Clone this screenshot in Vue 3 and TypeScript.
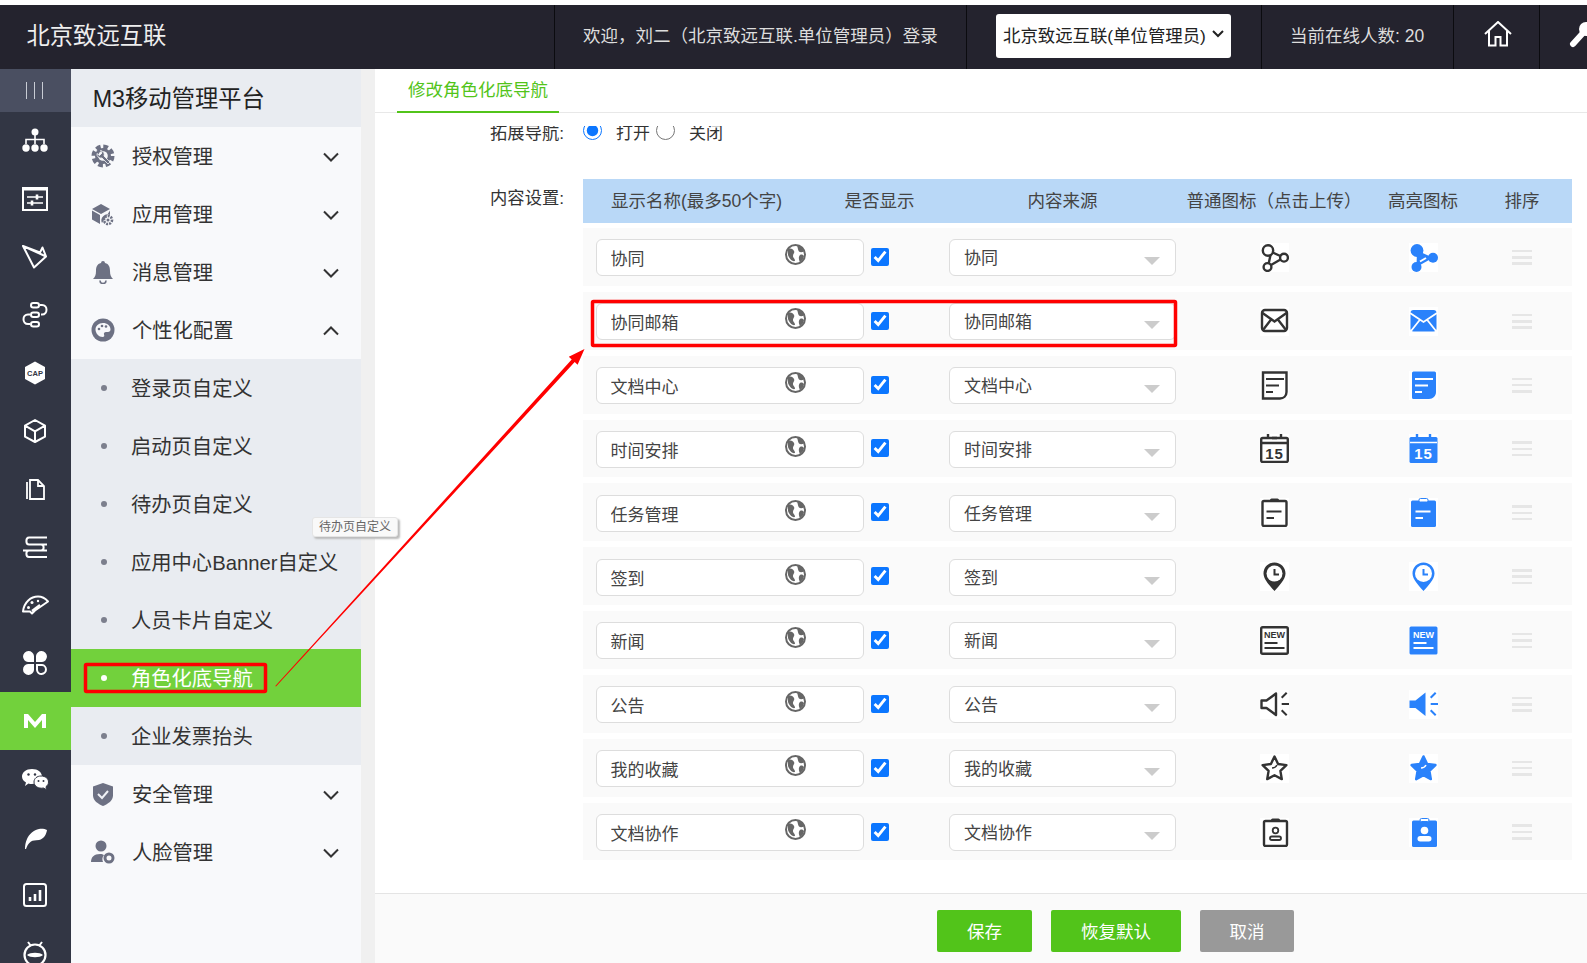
<script setup lang="ts">
const railIcons: string[] = [
  // org
  '<g fill="#fff"><circle cx="15" cy="6" r="3.5"/><circle cx="6" cy="22" r="3.7"/><circle cx="15" cy="22" r="3.7"/><circle cx="24" cy="22" r="3.7"/></g><path d="M15 6v12M6 18v-4.500h18V18" fill="none" stroke="#fff" stroke-width="1.600"/>',
  // sliders panel
  '<rect x="3" y="4" width="24" height="22" fill="none" stroke="#fff" stroke-width="2"/><rect x="3" y="4" width="24" height="2.500" fill="#fff"/><path d="M7 13h16M7 19h16" stroke="#fff" stroke-width="1.600"/><path d="M17 10.500v5M12 16.500v5" stroke="#fff" stroke-width="2.600"/>',
  // send
  '<path d="M3 4l23 10.500-12 11zM3 4l17 6.500 2.500-5 3.500 9" fill="none" stroke="#fff" stroke-width="2" stroke-linejoin="round"/>',
  // flow
  '<g fill="none" stroke="#fff" stroke-width="2"><rect x="11" y="3" width="8" height="4.500" rx="2.200"/><rect x="11" y="12.500" width="8" height="4.500" rx="2.200"/><rect x="11" y="22" width="8" height="4.500" rx="2.200"/><path d="M20 5h2c6 0 6 9.500 0 9.500h-1M10 14.500H8c-6 0-6 9.500 0 9.500h2"/></g>',
  // cap
  '<path d="M15 3.500l10 5.500v12l-10 5.500-10-5.500V9z" fill="#fff"/><text x="15" y="17.800" text-anchor="middle" font-size="7.500" font-weight="700" fill="#323644" font-family="Liberation Sans">CAP</text>',
  // cube
  '<path d="M15 4l10 5.700v11L15 26 5 20.700v-11zM5 9.700l10 5.700 10-5.700M15 15.400V26" fill="none" stroke="#fff" stroke-width="2" stroke-linejoin="round"/>',
  // file
  '<path d="M10 6h8l6 6v13H10zM18 6v6h6M7 8v17" fill="none" stroke="#fff" stroke-width="1.800"/>',
  // stack
  '<g fill="none" stroke="#fff" stroke-width="2"><path d="M27 5.500H9C5.500 5.500 5.500 12.500 9 12.500h18M3 18.500h18c3.500 0 3.500-6 0-6M3 18.500h24M9 18.500c-3.500 0-3.500 6.500 0 6.500h18"/></g>',
  // gauge
  '<path d="M3 21.500C4 12 11 6.500 18 6.500c4 0 7 1.500 10 5l-13 9-3 3-2-2z" fill="none" stroke="#fff" stroke-width="2" stroke-linejoin="round"/><g fill="#fff"><circle cx="8.500" cy="17.500" r="1.500"/><circle cx="12" cy="12.500" r="1.500"/><circle cx="18" cy="11" r="1.200"/></g><path d="M12 21l8-6" stroke="#fff" stroke-width="2.200"/>',
  // clover
  '<g fill="#fff"><path d="M14 14H8a5.500 5.500 0 1 1 6-6zM16 14h6a5.500 5.500 0 1 0-6-6zM14 16H8a5.500 5.500 0 1 0 6 6z"/></g><path d="M17 17h5a4.500 4.500 0 1 1-5 5z" fill="none" stroke="#fff" stroke-width="2"/>',
  // m
  '<path d="M4 22V8h4l7 8 7-8h4v14h-4V14l-7 8-7-8v8z" fill="#fff"/>',
  // wechat
  '<path d="M12 5c6 0 10 3.500 10 7.500 0 4.500-5 7.500-10 7.500-1.500 0-2.500 0-3.500-.5L5 22l1-3.500C3.500 17 2 15 2 12.500 2 8.500 6 5 12 5z" fill="#fff"/><path d="M21 12c4.500 0 7.500 2.700 7.500 6 0 2-1 3.500-2.500 4.700l.5 3-3-1.700c-5 1-9.500-1.700-9.500-6 0-3.500 3-6 7-6z" fill="#fff" stroke="#323644"/><g fill="#323644"><circle cx="8.500" cy="10.500" r="1.200"/><circle cx="15" cy="10.500" r="1.200"/><circle cx="18.500" cy="17" r="1"/><circle cx="23.500" cy="17" r="1"/></g>',
  // feather
  '<path d="M5 27c0-3 .5-7 2-10 2-5 7-9 12-10 3-.5 6 0 8 1-.5 4-3 9-8 10-4 .8-6 0-8 1.500-3 2-4 5-5 7.500z" fill="#fff"/>',
  // chart
  '<rect x="4" y="4" width="22" height="22" rx="2.500" fill="none" stroke="#fff" stroke-width="2"/><path d="M10 21v-4M15 21v-7M20 21V10" stroke="#fff" stroke-width="2.600"/>',
  // robot
  '<circle cx="15" cy="17" r="10.500" fill="none" stroke="#fff" stroke-width="2.200"/><path d="M8 4l3 4M22 4l-3 4" stroke="#fff" stroke-width="2"/><path d="M7 17c3-3 13-3 16 0-3 3-13 3-16 0z" fill="#fff"/>',
]

const sideIcons: Record<string, string> = {
  gear: '<circle cx="12" cy="12" r="9" fill="none" stroke="#6d7183" stroke-width="5" stroke-dasharray="4.500 2.570"/><circle cx="12" cy="12" r="8" fill="#6d7183"/><circle cx="12" cy="12" r="4.800" fill="#f8f9fb"/><path d="M9.500 6.500a4 4 0 0 1 3.500 5.500l6 6-2 2-6-6a4 4 0 0 1-5-4.500l2.500 2 2.500-2.500z" fill="#6d7183" stroke="#f8f9fb" stroke-width=".8"/>',
  box: '<path d="M10 2l9 5-9 5-9-5zM1 8.500l8 4.500v9L1 17.500zM19 8.500V13a6 6 0 0 0-8 8z" fill="#6d7183"/><circle cx="17" cy="18" r="4" fill="none" stroke="#6d7183" stroke-width="2.600" stroke-dasharray="2 1"/><circle cx="17" cy="18" r="1.500" fill="#6d7183"/>',
  bell: '<path d="M12 1a2 2 0 0 1 2 2c4 1 5 4 5 8 0 4 1 6 3 8H2c2-2 3-4 3-8 0-4 1-7 5-8a2 2 0 0 1 2-2z" fill="#6d7183"/><path d="M9 20.500a3 3 0 0 0 6 0" fill="none" stroke="#6d7183" stroke-width="1.600"/>',
  palette: '<circle cx="12" cy="12" r="11.500" fill="#6d7183"/><path d="M12 5c-4.500 0-7.500 3-7.500 6.500 0 4 3.500 7.500 7 7.500 2 0 2-1.500 1.500-2.500-.5-1.500.5-2.500 2-2.500h2c1.500 0 2.500-1 2.500-2.500C19.500 7.500 16 5 12 5z" fill="#f8f9fb"/><g fill="#6d7183"><circle cx="8" cy="11" r="1.300"/><circle cx="11" cy="8" r="1.300"/><circle cx="15" cy="8.500" r="1.300"/></g>',
  shield: '<path d="M12 1l10 3.500v9c0 5-5 8.500-10 10.500C7 22 2 18.500 2 13.500v-9z" fill="#6d7183"/><path d="M7 12l4 4 6-7" fill="none" stroke="#f0f2f6" stroke-width="2"/>',
  person: '<circle cx="10" cy="6" r="5.500" fill="#6d7183"/><path d="M0 22c0-5 3-8 9-8 2 0 3 .5 4 1-2 2-2 5-1 7z" fill="#6d7183"/><circle cx="18" cy="18" r="4" fill="none" stroke="#6d7183" stroke-width="3"/>',
}

type TableIcon = [string, string]
const D = '#333'
const B = '#2a82fb'
const tableIcons: Record<string, TableIcon> = {
  share: [
    `<g fill="none" stroke="${D}" stroke-width="2.400"><circle cx="8" cy="7.500" r="5.200"/><circle cx="24" cy="14.700" r="3.900"/><circle cx="7.500" cy="24" r="3.900"/><path d="M12.700 9.500l7.700 3.500M20.500 16.500l-9.500 5.500M10.500 12l-1.700 8"/></g>`,
    `<g fill="${B}"><circle cx="8" cy="7.500" r="6.400"/><circle cx="24" cy="14.700" r="5"/><circle cx="7.500" cy="24" r="5"/><path d="M8 7.500l16 7.200-16.500 9.300z"/></g><path d="M11 18.500l6-3.500" stroke="#fff" stroke-width="2"/>`,
  ],
  mail: [
    `<g fill="none" stroke="${D}" stroke-width="2.400"><rect x="2" y="3" width="25" height="21" rx="3"/><path d="M2.500 6l12 8.500L26.500 6M3 23l8.500-11M26 23l-8.500-11"/></g>`,
    `<rect x="1.500" y="3" width="26" height="21.500" rx="3" fill="${B}"/><path d="M1 6l13.500 9L28 6M2 24l9.500-12M27 24l-9.500-12" fill="none" stroke="#fff" stroke-width="1.800"/>`,
  ],
  doc: [
    `<path d="M3 1.500h23.500V21c0 4-3 6.500-6.500 6.500H3z" fill="none" stroke="${D}" stroke-width="2.400"/><path d="M6 8h18M6 14.500h13M6 21h7" stroke="${D}" stroke-width="2"/>`,
    `<path d="M3 2a1.500 1.500 0 0 1 1.500-1.500H25.500A1.500 1.500 0 0 1 27 2v19c0 4-3 7-7 7H4.500A1.500 1.500 0 0 1 3 26.500z" fill="${B}"/><path d="M6 8h18M6 14.500h13M6 21h7" stroke="#fff" stroke-width="2"/>`,
  ],
  cal: [
    `<rect x="1.200" y="4" width="26.600" height="24" rx="1.500" fill="none" stroke="${D}" stroke-width="2.400"/><path d="M8 0v5M21 0v5M1 9h27M12 4h5" stroke="${D}" stroke-width="2.400"/><text x="14.500" y="24.500" text-anchor="middle" font-size="15" font-weight="700" letter-spacing="1" fill="${D}" font-family="Liberation Sans">15</text>`,
    `<rect x=".5" y="3" width="28" height="26" rx="1.500" fill="${B}"/><path d="M8 0v4M21 0v4" stroke="${B}" stroke-width="2.400"/><path d="M1 8.500h27" stroke="#fff" stroke-width="1.500"/><text x="14.500" y="24.500" text-anchor="middle" font-size="15" font-weight="700" letter-spacing="1" fill="#fff" font-family="Liberation Sans">15</text>`,
  ],
  clip: [
    `<rect x="2.500" y="3" width="24" height="25" rx="1.500" fill="none" stroke="${D}" stroke-width="2.400"/><rect x="10" y=".5" width="9" height="3.500" rx="1.500" fill="${D}"/><path d="M6.500 13.500h15M6.500 20h7.500" stroke="${D}" stroke-width="2"/>`,
    `<rect x="2" y="2.500" width="25" height="26.500" rx="1.500" fill="${B}"/><rect x="10" y=".5" width="9" height="3.500" rx="1.500" fill="#fff" stroke="${B}"/><path d="M6.500 13.500h15M6.500 20h7.500" stroke="#fff" stroke-width="2"/>`,
  ],
  pin: [
    `<path d="M14.500.5C8 .5 3.500 5.500 3.500 11.500c0 6 7 13 11 17.500 4-4.500 11-11.500 11-17.500C25.500 5.500 21 .5 14.500.5z" fill="${D}"/><circle cx="14.500" cy="11.500" r="8" fill="#fff"/><path d="M14.500 7v5.500h4.500" fill="none" stroke="${D}" stroke-width="2"/>`,
    `<path d="M14.500.5C8 .5 3.500 5.500 3.500 11.500c0 6 7 13 11 17.500 4-4.500 11-11.500 11-17.500C25.500 5.500 21 .5 14.500.5z" fill="${B}"/><circle cx="14.500" cy="11.500" r="8.500" fill="#fff"/><path d="M14.500 7v5.500h4.500" fill="none" stroke="${B}" stroke-width="2"/>`,
  ],
  news: [
    `<rect x="1.200" y="1.200" width="26.600" height="26.600" rx="1.500" fill="none" stroke="${D}" stroke-width="2.400"/><text x="14.500" y="11.800" text-anchor="middle" font-size="9" font-weight="700" fill="${D}" font-family="Liberation Sans">NEW</text><path d="M4.500 17h13M4.500 22h20" stroke="${D}" stroke-width="2"/>`,
    `<rect x=".5" y=".5" width="28" height="28" rx="1.500" fill="${B}"/><text x="14.500" y="11.800" text-anchor="middle" font-size="9" font-weight="700" fill="#fff" font-family="Liberation Sans">NEW</text><path d="M4.500 17h13M4.500 22h20" stroke="#fff" stroke-width="2"/>`,
  ],
  horn: [
    `<path d="M1.500 10.500v7.500h5l9.500 7V3.500l-9.500 7z" fill="none" stroke="${D}" stroke-width="2.400" stroke-linejoin="round"/><path d="M21.700 7.700l5-5M21.700 14H29M21.700 20.300l5 5" stroke="${D}" stroke-width="2"/>`,
    `<path d="M.5 10.500v7.500h6l10 8V2.500l-10 8z" fill="${B}"/><path d="M21.700 7.700l5-5M21.700 14H29M21.700 20.300l5 5" stroke="${B}" stroke-width="2"/>`,
  ],
  star: [
    `<path d="M14.500 2.500L18.100 10L26.400 11.100L20.400 16.900L21.800 25.100L14.500 21.200L7.200 25.100L8.600 16.900L2.600 11.100L10.900 10Z" fill="none" stroke="${D}" stroke-width="2.400" stroke-linejoin="round"/><path d="M12 14c2 0 4-1 5-3" fill="none" stroke="${D}" stroke-width="1.500"/>`,
    `<path d="M14.500 2.500L18.100 10L26.400 11.100L20.400 16.900L21.800 25.100L14.500 21.200L7.200 25.100L8.600 16.900L2.600 11.100L10.900 10Z" fill="${B}" stroke="${B}" stroke-width="2.500" stroke-linejoin="round"/><path d="M12 14c2 0 4-1 5-3" fill="none" stroke="#fff" stroke-width="1.500"/>`,
  ],
  badge: [
    `<rect x="4" y="3" width="23" height="25" rx="1.500" fill="none" stroke="${D}" stroke-width="2.400"/><rect x="11" y=".5" width="9" height="3.500" rx="1.500" fill="${D}"/><circle cx="15.500" cy="12.500" r="2.800" fill="none" stroke="${D}" stroke-width="1.800"/><rect x="10" y="18.500" width="11" height="3.500" rx="1.700" fill="none" stroke="${D}" stroke-width="1.800"/>`,
    `<rect x="3" y="2.500" width="25" height="26.500" rx="1.500" fill="${B}"/><rect x="11" y=".5" width="9" height="3" rx="1.500" fill="#fff" stroke="${B}"/><circle cx="15.500" cy="12.500" r="3.800" fill="#fff"/><rect x="8.500" y="18" width="14" height="5.500" rx="2.700" fill="#fff"/>`,
  ],
}

interface NavRow {
  name: string
  icon: string
}

const rows: NavRow[] = [
  { name: '协同', icon: 'share' },
  { name: '协同邮箱', icon: 'mail' },
  { name: '文档中心', icon: 'doc' },
  { name: '时间安排', icon: 'cal' },
  { name: '任务管理', icon: 'clip' },
  { name: '签到', icon: 'pin' },
  { name: '新闻', icon: 'news' },
  { name: '公告', icon: 'horn' },
  { name: '我的收藏', icon: 'star' },
  { name: '文档协作', icon: 'badge' },
]

const topMenus = [
  { label: '授权管理', icon: 'gear' },
  { label: '应用管理', icon: 'box' },
  { label: '消息管理', icon: 'bell' },
]
const subMenus = ['登录页自定义', '启动页自定义', '待办页自定义', '应用中心Banner自定义', '人员卡片自定义', '角色化底导航', '企业发票抬头']
const bottomMenus = [
  { label: '安全管理', icon: 'shield' },
  { label: '人脸管理', icon: 'person' },
]
</script>

<template>
  <div class="page">
    <header class="topbar">
      <div class="brand">北京致远互联</div>
      <div class="cell welcome">欢迎，刘二（北京致远互联.单位管理员）登录</div>
      <div class="cell unit">
        <div class="unit-select">
          <span>北京致远互联(单位管理员)</span>
          <svg width="14" height="10" viewBox="0 0 14 10"><path d="M2 2l5 5 5-5" fill="none" stroke="#222" stroke-width="2" /></svg>
        </div>
      </div>
      <div class="cell online">当前在线人数: 20</div>
      <div class="cell home">
        <svg width="28" height="26" viewBox="0 0 28 26"><path d="M1 13L14 1l13 12M5 10v14.500h6.500V16h5v8.500H23V10" fill="none" stroke="#fff" stroke-width="2" /></svg>
      </div>
      <div class="cell tool">
        <svg width="30" height="30" viewBox="0 0 30 30"><path d="M6 25L16 14" stroke="#fff" stroke-width="6" stroke-linecap="round" /><circle cx="19" cy="10" r="7" fill="#fff" /><path d="M21 7l7-4v6z" fill="#24232e" /></svg>
      </div>
    </header>

    <div class="body">
      <nav class="rail">
        <div class="rail-item rail-toggle"><i></i><i></i><i></i></div>
        <div v-for="(ic, i) in railIcons" :key="i" class="rail-item" :class="{ on: i === 10 }">
          <svg width="30" height="30" viewBox="0 0 30 30" v-html="ic"></svg>
        </div>
      </nav>

      <aside class="side">
        <div class="side-title">M3移动管理平台</div>
        <div v-for="m in topMenus" :key="m.label" class="menu">
          <svg class="menu-icon" width="24" height="24" viewBox="0 0 24 24" v-html="sideIcons[m.icon]"></svg>
          <span>{{ m.label }}</span>
          <svg class="chev" width="18" height="10" viewBox="0 0 18 10"><path d="M2 1.500l7 7 7-7" fill="none" stroke="#333" stroke-width="2" /></svg>
        </div>
        <div class="menu">
          <svg class="menu-icon" width="24" height="24" viewBox="0 0 24 24" v-html="sideIcons.palette"></svg>
          <span>个性化配置</span>
          <svg class="chev" width="18" height="10" viewBox="0 0 18 10"><path d="M2 8.500l7-7 7 7" fill="none" stroke="#333" stroke-width="2" /></svg>
        </div>
        <div v-for="s in subMenus" :key="s" class="sub" :class="{ active: s === '角色化底导航' }">
          <i class="dot"></i><span>{{ s }}</span>
        </div>
        <div v-for="m in bottomMenus" :key="m.label" class="menu">
          <svg class="menu-icon" width="24" height="24" viewBox="0 0 24 24" v-html="sideIcons[m.icon]"></svg>
          <span>{{ m.label }}</span>
          <svg class="chev" width="18" height="10" viewBox="0 0 18 10"><path d="M2 1.500l7 7 7-7" fill="none" stroke="#333" stroke-width="2" /></svg>
        </div>
      </aside>

      <div class="gutter"></div>

      <main class="main">
        <div class="tabs"><div class="tab">修改角色化底导航</div></div>
        <div class="scroll">
          <div class="form-row radio-row">
            <label class="form-label">拓展导航:</label>
            <input class="radio" type="radio" name="ext" checked />
            <span class="radio-text">打开</span>
            <input class="radio radio-off" type="radio" name="ext" />
            <span class="radio-text">关闭</span>
          </div>

          <div class="form-row content-row">
            <label class="form-label content-label">内容设置:</label>
            <div class="table">
              <div class="grid head">
                <div class="h-name">显示名称(最多50个字)</div>
                <div class="c">是否显示</div>
                <div class="h-src">内容来源</div>
                <div class="c h-up">普通图标（点击上传）</div>
                <div class="c">高亮图标</div>
                <div class="c">排序</div>
              </div>
              <div v-for="r in rows" :key="r.name" class="grid row">
                <div class="field">
                  <input class="name-input" :value="r.name" readonly />
                  <svg class="globe" width="21" height="21" viewBox="0 0 21 21">
                    <circle cx="10.500" cy="10.500" r="9.500" fill="#fff" stroke="#666" stroke-width="2" />
                    <path d="M3 5c3-1 5 0 6 2s-1 3-1 5 2 2 2 5c-3 1-6-3-7-6zM12 1.500c3 0 6 3 7 6-2 1-4 1-5 0s-1-3-2-6zM15 11c2-1 3 0 4 1-.5 3-2 5-4 6-1-2-2-5 0-7z" fill="#666" />
                  </svg>
                </div>
                <div class="c"><input class="check" type="checkbox" checked /></div>
                <div class="source">
                  <span>{{ r.name }}</span>
                  <i class="tri"></i>
                </div>
                <div class="c"><svg class="tbl-icon" width="29" height="29" viewBox="0 0 29 29" v-html="tableIcons[r.icon][0]"></svg></div>
                <div class="c"><svg class="tbl-icon" width="29" height="29" viewBox="0 0 29 29" v-html="tableIcons[r.icon][1]"></svg></div>
                <div class="c"><div class="drag"><i></i><i></i><i></i></div></div>
              </div>
            </div>
          </div>
        </div>
        <footer class="footer">
          <button class="btn">保存</button>
          <button class="btn wide">恢复默认</button>
          <button class="btn gray">取消</button>
        </footer>
      </main>
    </div>

    <!-- 标注层：红框和箭头 -->
    <svg class="marks" width="1587" height="963" viewBox="0 0 1587 963">
      <rect x="85.500" y="664.500" width="180" height="27" rx="1" fill="none" stroke="#f00" stroke-width="3.500" />
      <rect x="592.500" y="301.500" width="583" height="44" rx="1" fill="none" stroke="#f00" stroke-width="3.500" />
      <polygon points="276,686.500 574.700,362.100 577.600,364.800 584.500,349 568.800,356.800 571.700,359.500 275.300,686" fill="#f00" />
    </svg>
    <div class="tip">待办页自定义</div>
  </div>
</template>

<style>
html, body { margin: 0; background: #fff; overflow: hidden; }
</style>

<style scoped>
.page {
  position: relative;
  width: 1587px;
  height: 963px;
  padding-top: 5px;
  box-sizing: border-box;
  overflow: hidden;
  display: flex;
  flex-direction: column;
  font-family: "Liberation Sans", "Noto Sans CJK SC", sans-serif;
  font-size: 17.500px;
  color: #333;
}

.topbar {
  height: 64px;
  flex: none;
  display: flex;
  background: #24232e;
  color: #ddd;
}
.brand {
  width: 554px;
  flex: none;
  box-sizing: border-box;
  padding-left: 26.500px;
  line-height: 62px;
  font-size: 23.300px;
  color: #eee;
}
.cell {
  border-left: 1px solid #0b0b0f;
  box-sizing: border-box;
  flex: none;
  display: flex;
  align-items: center;
  padding-bottom: 6px;
}
.welcome { width: 412px; padding-left: 28px; }
.unit { width: 295px; padding-left: 29px; padding-bottom: 2px; }
.unit-select {
  width: 235px;
  height: 44px;
  box-sizing: border-box;
  padding-left: 7px;
  padding-bottom: 4px;
  background: #fff;
  border-radius: 3px;
  color: #222;
  font-size: 17.400px;
  display: flex;
  align-items: center;
  gap: 5px;
}
.online { width: 192px; padding-left: 28px; }
.home { width: 86px; padding-left: 30px; }
.tool { width: 48px; padding-left: 27px; overflow: hidden; }
.tool svg { flex: none; }

.body {
  flex: 1;
  display: flex;
  min-height: 0;
}
.rail {
  width: 71px;
  flex: none;
  background: #323644;
  overflow: hidden;
}
.rail-item {
  height: 58px;
  box-sizing: border-box;
  padding-right: 2px;
  display: flex;
  align-items: center;
  justify-content: center;
}
.rail-item.on { background: #72d13c; }
.rail-toggle {
  height: 43px;
  gap: 6.500px;
  background: #4a4f61;
}
.rail-toggle i {
  width: 1.500px;
  height: 17px;
  background: #c8ccd4;
}

.side {
  width: 290px;
  flex: none;
  background: #f8f9fb;
}
.side-title {
  height: 58px;
  line-height: 60px;
  padding-left: 21.700px;
  font-size: 23.300px;
  color: #222;
  background: #e9ecf1;
}
.menu {
  height: 58px;
  display: flex;
  align-items: center;
  padding: 0 21px 0 20px;
  font-size: 20.300px;
}
.menu span { margin-top: -2px; margin-left: -1px; }
.menu-icon { flex: none; margin-right: 18px; }
.chev { margin-left: auto; margin-top: 2px; }
.sub {
  height: 58px;
  display: flex;
  align-items: center;
  padding-left: 30px;
  font-size: 20.300px;
  background: #e9ecf1;
}
.sub span { margin-top: -2px; margin-left: -1px; }
.dot {
  width: 6px;
  height: 6px;
  border-radius: 50%;
  margin-right: 25px;
  background: #7c7f8d;
}
.sub.active { background: #72d13c; color: #fff; }
.sub.active .dot { background: #fff; }

.gutter { width: 14px; flex: none; background: #f0f0f0; }

.main {
  flex: 1;
  min-width: 0;
  display: flex;
  flex-direction: column;
}
.tabs {
  height: 44px;
  flex: none;
  box-sizing: border-box;
  padding-left: 22px;
  border-bottom: 1px solid #e8e8e8;
}
.tab {
  width: 162px;
  height: 44px;
  box-sizing: border-box;
  padding-left: 11px;
  line-height: 43px;
  color: #52c41a;
  border-bottom: 2px solid #52c41a;
}
.scroll {
  flex: 1;
  min-height: 0;
  margin-top: 13px;
  overflow: hidden;
}
.form-row { display: flex; }
.form-label {
  width: 208px;
  flex: none;
  box-sizing: border-box;
  padding-right: 19px;
  text-align: right;
  font-size: 17.300px;
}
.radio-row {
  height: 30px;
  margin-top: -9px;
  align-items: center;
}
.radio-row .form-label { margin-bottom: 1px; }
.radio {
  width: 19px;
  height: 19px;
  margin: -3px 14px 0 0;
  flex: none;
  accent-color: #0b76ff;
}
.radio-off { margin-left: 6px; }
.radio-text { width: 34px; font-size: 17px; margin-bottom: 2px; }
.content-row { margin-top: 32px; }
.content-label { padding-top: 5px; }
.table { width: 989px; flex: none; }
.grid {
  display: grid;
  grid-template-columns: 285px 23px 299px 168px 130px 68px 16px;
  align-items: center;
}
.head {
  height: 43.700px;
  margin-bottom: 5.300px;
  box-sizing: border-box;
  padding-bottom: 2px;
  background: #b9d8f7;
  color: #444;
}
.c {
  display: flex;
  justify-content: center;
  align-items: center;
  white-space: nowrap;
}
.h-name { padding-left: 28px; }
.h-src { text-align: center; padding-left: 58px; padding-right: 14px; }
.row {
  height: 57.850px;
  margin-bottom: 6px;
  background: #fafafa;
}
.field {
  position: relative;
  width: 268px;
  margin: 2px 0 0 12.500px;
}
.name-input {
  width: 100%;
  height: 37px;
  box-sizing: border-box;
  display: block;
  padding: 0 0 0 14px;
  border: 1px solid #ddd;
  border-radius: 6px;
  background: #fff;
  font: inherit;
  font-size: 17px;
  color: #444;
  outline: none;
}
.globe {
  position: absolute;
  top: 5px;
  right: 58px;
}
.check {
  width: 18px;
  height: 18px;
  margin: 0;
  accent-color: #0b76ff;
}
.source {
  position: relative;
  width: 227px;
  height: 37px;
  margin: 2px 0 0 58px;
  box-sizing: border-box;
  padding-left: 14px;
  line-height: 38px;
  font-size: 17px;
  color: #444;
  background: #fff;
  border: 1px solid #ddd;
  border-radius: 6px;
}
.tri {
  position: absolute;
  right: 15px;
  top: 17px;
  border-top: 8.500px solid #ccc;
  border-left: 8px solid transparent;
  border-right: 8px solid transparent;
}
.tbl-icon { background: #fff; display: block; margin-top: 1px; }
.drag {
  width: 20px;
  margin-top: 1px;
  display: flex;
  flex-direction: column;
  gap: 3.800px;
}
.drag i {
  height: 2.500px;
  background: #e6e6e6;
}

.footer {
  height: 70px;
  flex: none;
  box-sizing: border-box;
  border-top: 1px solid #e4e4e4;
  background: #fafafa;
  padding: 16px 0 0 562px;
  display: flex;
  gap: 19px;
}
.btn {
  width: 95px;
  height: 42px;
  border: 0;
  border-radius: 2px;
  padding: 0 0 2px;
  background: #52c41a;
  color: #fff;
  font: inherit;
}
.btn.wide { width: 130px; }
.btn.gray { width: 94px; background: #999; }

.marks {
  position: absolute;
  left: 0;
  top: 0;
  pointer-events: none;
}
.tip {
  position: absolute;
  left: 312px;
  top: 517px;
  width: 86px;
  height: 20px;
  box-sizing: border-box;
  text-align: center;
  line-height: 19px;
  font-size: 12px;
  color: #666;
  background: #f9f9f9;
  border: 1px solid #e5e5e5;
  border-radius: 3px;
  box-shadow: 2px 2px 2px #bbb;
}
</style>
